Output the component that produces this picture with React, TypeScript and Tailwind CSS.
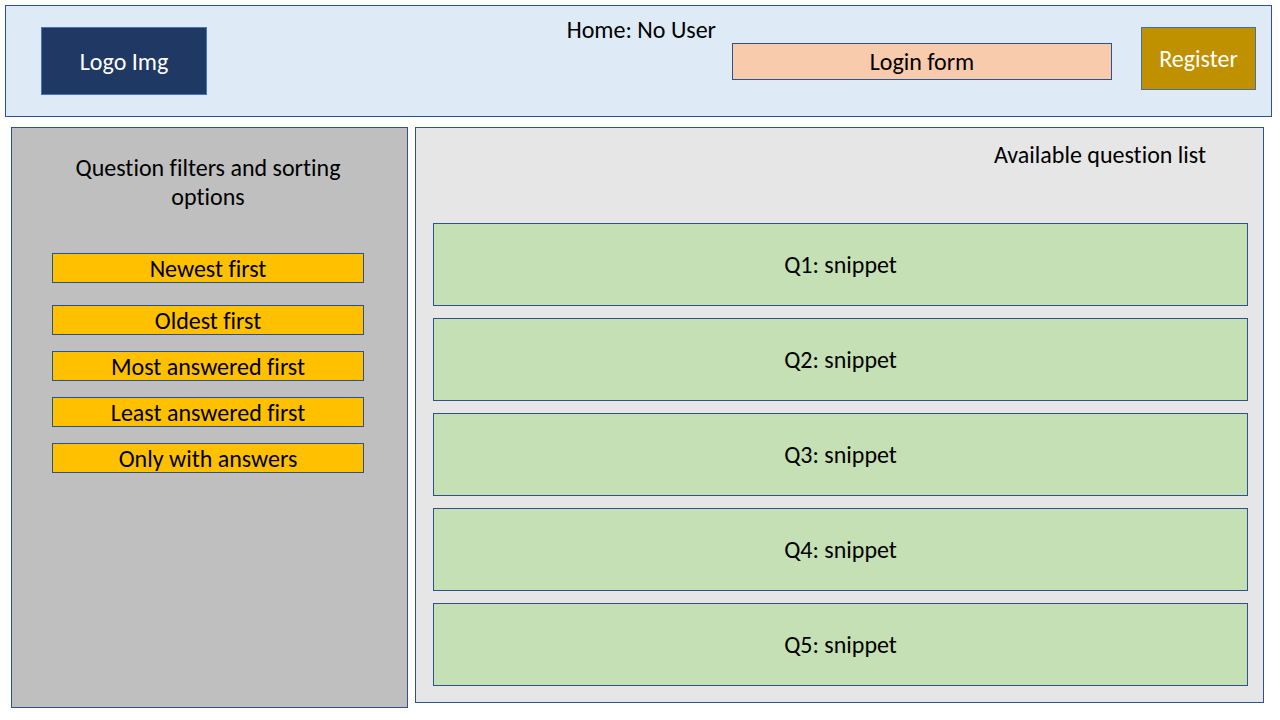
const filters = [
  "Newest first",
  "Oldest first",
  "Most answered first",
  "Least answered first",
  "Only with answers",
];

const questions = [
  "Q1: snippet",
  "Q2: snippet",
  "Q3: snippet",
  "Q4: snippet",
  "Q5: snippet",
];

function Header() {
  return (
    <header className="flex h-28 items-start border border-[#2f528f] bg-[#deebf7] pt-[9px] pr-[15px] pl-[35px]">
      <div className="mt-3 flex h-[68px] w-[166px] shrink-0 items-center justify-center border border-[#4472c4] bg-[#203864] text-white">
        Logo Img
      </div>
      <h1 className="ml-auto shrink-0 pr-4">Home: No User</h1>
      <section className="mt-7 flex h-[37px] w-[380px] items-center justify-center border border-[#2f528f] bg-[#f8cbad]">
        Login form
      </section>
      <button
        type="button"
        className="mt-3 ml-[29px] h-[63px] w-[115px] shrink-0 border border-[#41719c] bg-[#bf9000] text-white"
      >
        Register
      </button>
    </header>
  );
}

function FilterPanel() {
  return (
    <aside className="min-h-[581px] w-[397px] shrink-0 border border-[#2f528f] bg-[#bfbfbf] pt-[25px] pr-[43px] pl-10">
      <h2 className="px-5 text-center">Question filters and sorting options</h2>
      <ul className="mt-[42px] flex flex-col gap-4">
        {filters.map((label) => (
          <li key={label} className="first:mb-1.5">
            <button
              type="button"
              className="flex h-[30px] w-full items-center justify-center border border-[#2f528f] bg-[#ffc000]"
            >
              {label}
            </button>
          </li>
        ))}
      </ul>
    </aside>
  );
}

function QuestionList() {
  return (
    <main className="grow self-start border border-[#2f528f] bg-[#e7e6e6] pt-3 pr-[15px] pb-4 pl-[17px]">
      <h2 className="pr-[42px] text-right">Available question list</h2>
      <ul className="mt-[54px] flex flex-col gap-3">
        {questions.map((text) => (
          <li
            key={text}
            className="flex h-[83px] items-center justify-center border border-[#2f528f] bg-[#c5e0b4]"
          >
            {text}
          </li>
        ))}
      </ul>
    </main>
  );
}

export default function App() {
  return (
    <div className="min-h-screen bg-white pt-[5px] pr-2 pb-3 pl-[5px] font-[Carlito,Lato,sans-serif] text-[24px] leading-[29px] text-black [font-variant-ligatures:none]">
      <Header />
      <div className="mt-2.5 flex gap-[7px] pr-2 pl-1.5">
        <FilterPanel />
        <QuestionList />
      </div>
    </div>
  );
}
